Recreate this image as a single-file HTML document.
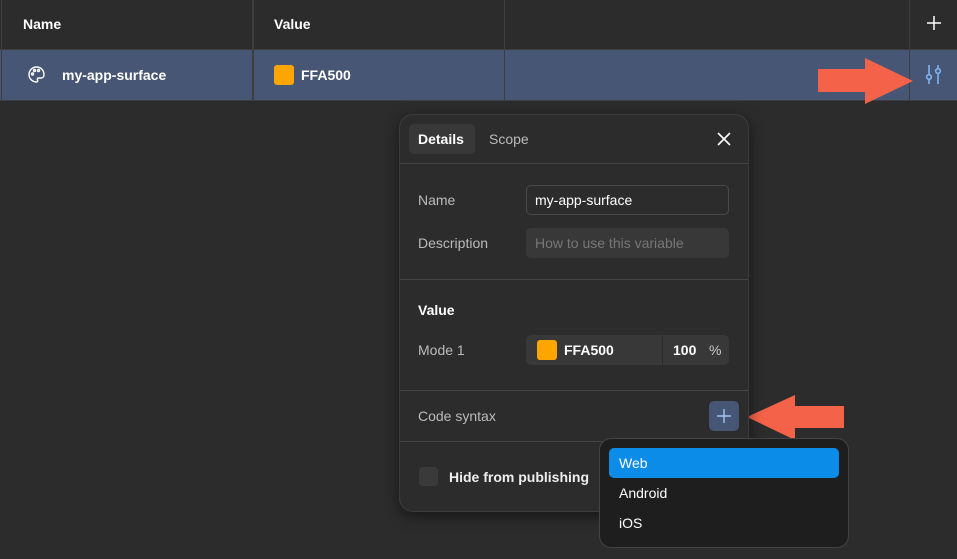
<!DOCTYPE html><html><head><style>
body{margin:0;width:957px;height:559px;background:#2c2c2c;font-family:"Liberation Sans",sans-serif;position:relative;overflow:hidden;color:#fff}
.a{position:absolute}
.t{font-size:14px;position:absolute;white-space:nowrap}
</style></head><body>
<div class="a" style="left:0;top:0;width:957px;height:49px;background:#2c2c2c;border-bottom:1px solid #3e3e3e"></div>
<div class="a" style="left:0;top:49px;width:957px;height:50px;background:#485675;border-top:1px solid #3e3e3e;border-bottom:1px solid #3e3e3e"></div>
<div class="a" style="left:1px;top:0;width:1px;height:100px;background:#3e3e3e"></div>
<div class="a" style="left:252px;top:0;width:2px;height:100px;background:#3e3e3e"></div>
<div class="a" style="left:504px;top:0;width:1px;height:100px;background:#3e3e3e"></div>
<div class="a" style="left:909px;top:0;width:1px;height:100px;background:#3e3e3e"></div>
<div class="t" style="left:23px;top:16px;font-weight:bold">Name</div>
<div class="t" style="left:274px;top:16px;font-weight:bold">Value</div>
<svg class="a" style="left:927px;top:16px" width="14" height="14" stroke="#fff" stroke-width="1.5"><path d="M7 0v14M0 7h14"/></svg>
<svg class="a" style="left:27px;top:65px" width="19" height="19" viewBox="0 0 19 19" fill="none" stroke="#fff" stroke-width="1.4"><path d="M9.5 2a7.5 7.5 0 1 0 0 15c1.2 0 1.5-1 1-2s0-2 1.2-2h2.3c1.6 0 3-1.2 3-3.3C17 5 13.6 2 9.5 2z"/><circle cx="5.5" cy="9" r="1"/><circle cx="7.5" cy="5.5" r="1"/><circle cx="11.5" cy="5.5" r="1"/></svg>
<div class="t" style="left:62px;top:67px;font-weight:bold">my-app-surface</div>
<div class="a" style="left:274px;top:65px;width:20px;height:20px;border-radius:3px;background:#ffa500"></div>
<div class="t" style="left:301px;top:67px;font-weight:bold">FFA500</div>
<svg class="a" style="left:922px;top:62px" width="26" height="26" viewBox="0 0 26 26" fill="none" stroke="#7cb4f0" stroke-width="1.6"><path d="M7 3v10M7 17v5M16 3v4M16 11v11"/><circle cx="7" cy="15" r="2.3"/><circle cx="16" cy="9" r="2.3"/></svg>
<svg class="a" style="left:0;top:0" width="957" height="559"><polygon fill="#f46249" points="818,69 865,69 865,58 913,81 865,104 865,92 818,92"/><polygon fill="#f46249" points="844,406 795,406 795,395 747,417 795,440 795,428 844,428"/></svg>
<div class="a" style="left:399px;top:114px;width:348px;height:396px;background:#2c2c2c;border:1px solid #3c3c3c;border-radius:14px;box-shadow:0 4px 14px rgba(0,0,0,.5)"></div>
<div class="a" style="left:409px;top:124px;width:66px;height:30px;background:#383838;border-radius:5px"></div>
<div class="t" style="left:418px;top:131px;font-weight:bold">Details</div>
<div class="t" style="left:489px;top:131px;color:#bbb">Scope</div>
<svg class="a" style="left:716px;top:131px" width="16" height="16" stroke="#fff" stroke-width="1.6"><path d="M2 2L14 14M14 2L2 14"/></svg>
<div class="a" style="left:400px;top:163px;width:348px;height:1px;background:#444"></div>
<div class="t" style="left:418px;top:192px;color:#bbb">Name</div>
<div class="a" style="left:526px;top:185px;width:201px;height:28px;border:1px solid #4a4a4a;border-radius:5px"></div>
<div class="t" style="left:535px;top:192px">my-app-surface</div>
<div class="t" style="left:418px;top:235px;color:#bbb">Description</div>
<div class="a" style="left:526px;top:228px;width:203px;height:30px;background:#383838;border-radius:5px"></div>
<div class="t" style="left:535px;top:235px;color:#777">How to use this variable</div>
<div class="a" style="left:400px;top:279px;width:348px;height:1px;background:#444"></div>
<div class="t" style="left:418px;top:302px;font-weight:bold">Value</div>
<div class="t" style="left:418px;top:342px;color:#bbb">Mode 1</div>
<div class="a" style="left:526px;top:335px;width:203px;height:30px;background:#383838;border-radius:5px"></div>
<div class="a" style="left:662px;top:335px;width:1px;height:30px;background:#2c2c2c"></div>
<div class="a" style="left:537px;top:340px;width:20px;height:20px;border-radius:3px;background:#ffa500"></div>
<div class="t" style="left:564px;top:342px;font-weight:bold">FFA500</div>
<div class="t" style="left:673px;top:342px;font-weight:bold">100</div>
<div class="t" style="left:709px;top:342px;color:#ccc">%</div>
<div class="a" style="left:400px;top:390px;width:348px;height:1px;background:#444"></div>
<div class="t" style="left:418px;top:408px;color:#bbb">Code syntax</div>
<div class="a" style="left:709px;top:401px;width:30px;height:30px;background:#485675;border-radius:5px"></div>
<svg class="a" style="left:716px;top:408px" width="16" height="16" stroke="#9cc8f5" stroke-width="1.4"><path d="M8 1v14M1 8h14"/></svg>
<div class="a" style="left:400px;top:441px;width:348px;height:1px;background:#444"></div>
<div class="a" style="left:419px;top:467px;width:19px;height:19px;background:#3a3a3a;border-radius:4px"></div>
<div class="t" style="left:449px;top:469px;font-weight:bold;color:#eee">Hide from publishing</div>
<div class="a" style="left:599px;top:438px;width:248px;height:108px;background:#1e1e1e;border:1px solid #444;border-radius:12px"></div>
<div class="a" style="left:609px;top:448px;width:230px;height:30px;background:#0c8ce9;border-radius:5px"></div>
<div class="t" style="left:619px;top:455px">Web</div>
<div class="t" style="left:619px;top:485px">Android</div>
<div class="t" style="left:619px;top:515px">iOS</div>
</body></html>
